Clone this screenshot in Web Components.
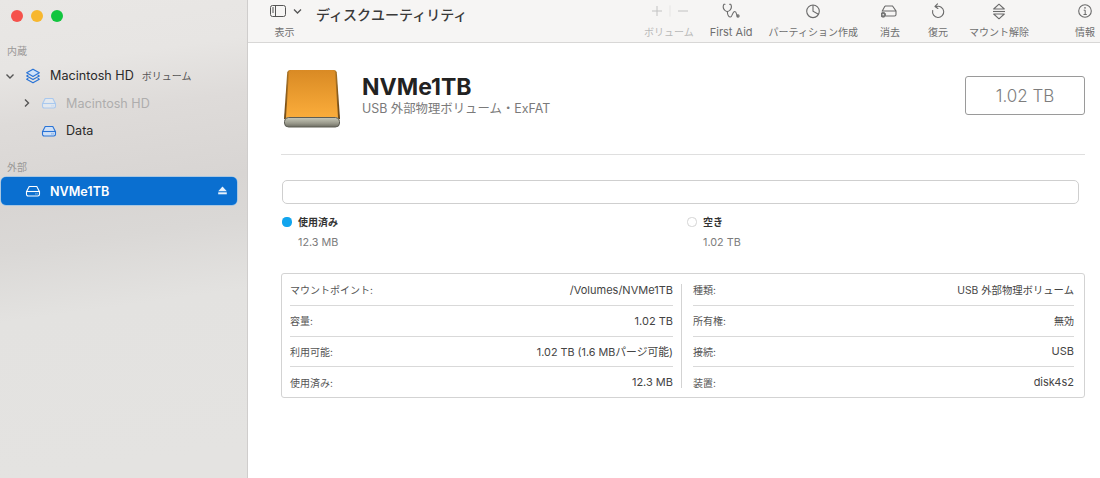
<!doctype html>
<html lang="ja">
<head>
<meta charset="utf-8">
<title>ディスクユーティリティ</title>
<style>
  html, body { margin: 0; height: 100%; overflow: hidden; }
  body { font-family: Inter, "Noto Sans CJK JP", sans-serif; color: #2b2b2b; }
</style>
</head>
<body>
<du-app>
  <du-sidebar slot="sidebar">
    <du-section>内蔵</du-section>
    <du-side-row depth="0" chevron="down" icon="stack" note="ボリューム" style="margin-top:4px;--h:27px">Macintosh HD</du-side-row>
    <du-side-row depth="1" chevron="right" icon="disk" dim style="--h:28px">Macintosh HD</du-side-row>
    <du-side-row depth="1" icon="disk">Data</du-side-row>
    <du-section style="margin-top:15.5px">外部</du-section>
    <du-side-row depth="0" icon="disk" selected style="margin-top:3px">NVMe1TB</du-side-row>
  </du-sidebar>

  <du-toolbar slot="toolbar">
    <du-tool icon="plusminus" disabled style="margin-left:0">ボリューム</du-tool>
    <du-tool icon="scope" style="margin-left:16px;--label:11px">First Aid</du-tool>
    <du-tool icon="pie" style="margin-left:16px">パーティション作成</du-tool>
    <du-tool icon="erase" style="margin-left:22px">消去</du-tool>
    <du-tool icon="restore" style="margin-left:28px">復元</du-tool>
    <du-tool icon="mount" style="margin-left:21px">マウント解除</du-tool>
    <du-tool icon="info" style="margin-left:46px">情報</du-tool>
  </du-toolbar>

  <du-header name="NVMe1TB" sub="USB 外部物理ボリューム・ExFAT" size="1.02 TB"></du-header>
  <du-usage></du-usage>
  <du-info>
    <du-info-row slot="left" label="マウントポイント:">/Volumes/NVMe1TB</du-info-row>
    <du-info-row slot="left" label="容量:">1.02 TB</du-info-row>
    <du-info-row slot="left" label="利用可能:" style="--value:10.8px">1.02 TB (1.6 MBパージ可能)</du-info-row>
    <du-info-row slot="left" label="使用済み:" last>12.3 MB</du-info-row>
    <du-info-row slot="right" label="種類:" style="--value:10.35px">USB 外部物理ボリューム</du-info-row>
    <du-info-row slot="right" label="所有権:" style="--value:10px">無効</du-info-row>
    <du-info-row slot="right" label="接続:">USB</du-info-row>
    <du-info-row slot="right" label="装置:" last>disk4s2</du-info-row>
  </du-info>
</du-app>

<script>
const DISK_PATH = `
  <path d="M4.2 2.5h7.6l2.7 5.2v2.6a1.7 1.7 0 0 1-1.7 1.7H3.2a1.7 1.7 0 0 1-1.7-1.7V7.700z" fill="var(--fill,none)"/>
  <path d="M1.700 7.500h12.600"/>
  <path d="M10.500 9.900h.9M12.300 9.900h.5" stroke-width="1"/>`

const ICONS = {
  disk: `<svg width="16" height="14" viewBox="0 0 16 14" fill="none" stroke="currentColor" stroke-width="1.1">${DISK_PATH}</svg>`,
  stack: `<svg width="16" height="16" viewBox="0 0 16 16" fill="none" stroke="currentColor" stroke-width="1.200" stroke-linejoin="round">
    <path d="M8 1.200 14.300 4.800 8 8.400 1.700 4.800z" fill="#cfe2fa"/>
    <path d="M3.300 7 1.700 8 8 11.600 14.300 8 12.700 7"/>
    <path d="M3.300 10.200 1.700 11.200 8 14.800 14.300 11.200 12.700 10.200"/></svg>`,
  plusminus: `<svg width="44" height="14" viewBox="0 0 44 14" fill="none" stroke="currentColor" stroke-width="1">
    <path d="M5 7h10M10 2v10M31 7h10"/><path d="M23 1.500v11" stroke-opacity=".3"/></svg>`,
  scope: `<svg width="18" height="16" viewBox="0 0 18 16" fill="none" stroke="currentColor" stroke-width="1.100" stroke-linecap="round" stroke-linejoin="round">
    <path d="M3 1.200H1.900C1 3 1 5.400 2.500 7 3.300 7.900 4.300 8.500 5.300 8.500S7.300 7.900 8.100 7C9.600 5.400 9.600 3 8.700 1.200H7.600"/>
    <path d="M5.300 8.500C5.500 12 7 14 8.500 14 10.500 14 10.300 8.500 12.700 8.500 15 8.500 14.300 13.500 16 13.500"/><circle cx="16" cy="13" r="1.100"/></svg>`,
  pie: `<svg width="16" height="16" viewBox="0 0 16 16" fill="none" stroke="currentColor" stroke-width="1.100">
    <circle cx="8" cy="8.300" r="6.300"/><path d="M8 2v6.300l5.400 3"/></svg>`,
  erase: `<svg width="18" height="15" viewBox="1.500 0 18 15" fill="none" stroke="currentColor" stroke-width="1.100">
    <path d="M5.500 2h7.500l3.500 5v3.500a1.500 1.500 0 0 1-1.500 1.500H6M2.500 7.500 5.500 2M3 7h13.500"/><circle cx="3.700" cy="10.800" r="2.400" fill="#7a7a7a" stroke-width=".9"/><circle cx="3.700" cy="10.800" r=".8" fill="#f6f5f4" stroke="none"/></svg>`,
  restore: `<svg width="16" height="17" viewBox="0 0 16 17" fill="none" stroke="currentColor" stroke-width="1.100" stroke-linecap="round" stroke-linejoin="round">
    <path d="M6.500 3.500A5.600 5.600 0 1 1 2.700 7.500"/><path d="M7.500.9 5 3.500l2.900 2"/></svg>`,
  mount: `<svg width="16" height="17" viewBox="0 0 16 17" fill="none" stroke="currentColor" stroke-width="1.100" stroke-linejoin="round">
    <path d="M8 1.200 13.300 6H2.700z"/><path d="M2 8.500h12"/><path d="M2.700 11h10.600L8 15.800z"/></svg>`,
  info: `<svg width="16" height="16" viewBox="0 0 16 16" fill="none" stroke="currentColor" stroke-width="1.100">
    <circle cx="8" cy="8" r="6.300"/><path d="M6.700 7.200H8.200V11.500M6.500 11.500H9.800" stroke-width="1"/><circle cx="8" cy="4.900" r=".8" fill="currentColor" stroke="none"/></svg>`,
}

function shadow(host, html) {
  const root = host.attachShadow({ mode: 'open' })
  root.innerHTML = html
  return root
}

class DuApp extends HTMLElement {
  constructor() {
    super()
    shadow(this, `
      <style>
        :host { display: flex; width: 1100px; height: 478px; background: #fff; }
        .side { width: 247px; flex: none; border-right: 1px solid #cfcdcc; }
        .main { flex: 1; min-width: 0; display: flex; flex-direction: column; }
        .body { padding: 0 15px 0 33px; }
      </style>
      <div class="side"><slot name="sidebar"></slot></div>
      <div class="main">
        <slot name="toolbar"></slot>
        <div class="body"><slot></slot></div>
      </div>`)
  }
}

class DuSidebar extends HTMLElement {
  constructor() {
    super()
    shadow(this, `
      <style>
        :host {
          display: block; height: 478px; box-sizing: border-box; padding: 10px 10px 0 1px;
          background: linear-gradient(172deg, #e9e7e5 0, #e7e5e3 70px, #dedbd9 125px, #d8d5d3 205px, #dad8d6 250px, #e3e2e0 320px, #e4e3e1 478px);
        }
        .lights { display: flex; gap: 8px; padding-left: 10px; margin-bottom: 22px; }
        .lights i { width: 12px; height: 12px; border-radius: 50%; }
      </style>
      <div class="lights">
        <i style="background:#f5524c"></i><i style="background:#f7b72f"></i><i style="background:#12c53f"></i>
      </div>
      <slot></slot>`)
  }
}

class DuSection extends HTMLElement {
  constructor() {
    super()
    shadow(this, `
      <style>
        :host { display: block; padding-left: 6px; font-size: 10px; line-height: 14px; color: #9a9897; }
      </style><slot></slot>`)
  }
}

class DuSideRow extends HTMLElement {
  connectedCallback() {
    const depth = Number(this.getAttribute('depth') || 0)
    const selected = this.hasAttribute('selected')
    const dim = this.hasAttribute('dim')
    const chev = this.getAttribute('chevron')
    const note = this.getAttribute('note')
    const chevPath = chev === 'down' ? 'M1.500 3.500 5 7l3.500-3.500' : 'M3 1.500 6.500 5 3 8.500'
    const icon = this.getAttribute('icon')
    shadow(this, `
      <style>
        :host { display: block; }
        .row {
          display: flex; align-items: center; height: var(--h, ${selected ? 28 : 27.5}px); box-sizing: border-box; border-radius: 5px;
          padding-left: ${depth ? 40 : 24}px; position: relative;
          font-size: 12.600px; font-weight: ${selected ? 600 : 400};
          color: ${selected ? '#fff' : dim ? '#aeadad' : '#2a2a2a'};
          background: ${selected ? '#0a6fd0' : 'none'};
          ${selected ? 'box-shadow: 0 0 0 .5px #7ab8ee;' : ''}
        }
        .chev { position: absolute; left: ${depth ? 21 : 4}px; top: 9px; color: #555; }
        .icon {
          width: 16px; flex: none; display: flex; justify-content: center; margin-right: 9px;
          color: ${selected ? '#fff' : dim ? '#a9c8ee' : '#2a74d6'};
          --fill: ${selected ? 'none' : dim ? '#e3e8ee' : '#cfe0f6'};
        }
        .note { margin-left: 8px; font-size: 10px; font-weight: 400; color: #555; }
        .eject { position: absolute; right: 10px; top: 9px; }
      </style>
      <div class="row">
        ${chev ? `<svg class="chev" width="10" height="10" viewBox="0 0 10 10" fill="none" stroke="currentColor" stroke-width="1.400"><path d="${chevPath}"/></svg>` : ''}
        <span class="icon">${ICONS[icon]}</span>
        <span><slot></slot></span>
        ${note ? `<span class="note">${note}</span>` : ''}
        ${selected ? '<svg class="eject" width="9" height="9" viewBox="0 0 9 9" fill="#e8f2fc"><path d="M4.500 .5 8.800 5.200H.2z"/><rect x=".2" y="6.300" width="8.600" height="2"/></svg>' : ''}
      </div>`)
  }
}

class DuToolbar extends HTMLElement {
  constructor() {
    super()
    shadow(this, `
      <style>
        :host {
          display: flex; height: 43px; box-sizing: border-box; flex: none;
          background: #f6f5f4; border-bottom: 1px solid #d8d7d6; padding-right: 5px; position: relative;
        }
        .view { width: 68px; padding-left: 22px; flex: none; box-sizing: border-box; }
        .glyphs { display: flex; align-items: center; gap: 7px; height: 22px; color: #555; }
        .label { display: block; width: 29px; text-align: center; font-size: 10px; line-height: 14px; color: #6f6f6f; margin-top: 3px; }
        .title { font-size: 14px; font-weight: 500; color: #3a3a3a; line-height: 16px; padding-top: 7px; width: 320px; flex: none; white-space: nowrap; }
        .tools { display: flex; flex: 1; justify-content: flex-end; }
      </style>
      <div class="view">
        <div class="glyphs">
          <svg width="16" height="12" viewBox="0 0 16 12" fill="none" stroke="currentColor" stroke-width="1"><rect x=".5" y=".5" width="15" height="11" rx="2"/><path d="M5.500 .5v11M2 3h2M2 5h2M2 7h2" /></svg>
          <svg width="9" height="7" viewBox="0 0 9 7" fill="none" stroke="currentColor" stroke-width="1.300"><path d="M1 1.500 4.500 5 8 1.500"/></svg>
        </div>
        <span class="label">表示</span>
      </div>
      <div class="title">ディスクユーティリティ</div>
      <div class="tools"><slot></slot></div>`)
  }
}

class DuTool extends HTMLElement {
  connectedCallback() {
    const off = this.hasAttribute('disabled')
    shadow(this, `
      <style>
        :host { display: flex; flex-direction: column; align-items: center; flex: none; }
        .glyph { height: 22px; display: flex; align-items: center; color: ${off ? '#c2c2c2' : '#6a6a6a'}; }
        .label { font-size: var(--label, 10px); line-height: 14px; margin-top: 3px; white-space: nowrap; color: ${off ? '#b9b9b9' : '#6f6f6f'}; }
      </style>
      <div class="glyph">${ICONS[this.getAttribute('icon')]}</div>
      <div class="label"><slot></slot></div>`)
  }
}

class DuHeader extends HTMLElement {
  connectedCallback() {
    shadow(this, `
      <style>
        :host {
          display: flex; align-items: flex-start; height: 112px; box-sizing: border-box;
          padding-top: 26px; border-bottom: 1px solid #dfdfdf;
        }
        svg { flex: none; margin-left: 1px; }
        .text { margin-left: 20px; flex: 1; padding-top: 4px; }
        .name { font-size: 23px; font-weight: 700; line-height: 29px; color: #222; }
        .sub { font-size: 12.400px; line-height: 15px; color: #7a7a7a; margin-top: -1px; }
        .size {
          width: 120px; height: 39px; box-sizing: border-box; margin-top: 7px; border: 1px solid #9a9a9a; border-radius: 3px;
          display: flex; align-items: center; justify-content: center; font-size: 17px; font-weight: 300; color: #7d7d7d;
        }
      </style>
      <svg width="60" height="60" viewBox="0 0 60 60">
        <defs>
          <linearGradient id="o" x1="0" y1="0" x2="0" y2="1"><stop offset="0" stop-color="#d98a24"/><stop offset="1" stop-color="#fbad3b"/></linearGradient>
          <linearGradient id="e" x1="0" y1="0" x2="1" y2="0"><stop offset="0" stop-color="#5f3d10"/><stop offset=".08" stop-color="#b57a25"/><stop offset=".92" stop-color="#b57a25"/><stop offset="1" stop-color="#553710"/></linearGradient>
          <linearGradient id="b" x1="0" y1="0" x2="0" y2="1"><stop offset="0" stop-color="#c8c9ba"/><stop offset=".6" stop-color="#9a9a8c"/><stop offset="1" stop-color="#6c6c62"/></linearGradient>
        </defs>
        <path d="M8 1h44q2.500 0 2.800 2.500L58 50H2L5.200 3.500Q5.500 1 8 1z" fill="url(#e)"/>
        <path d="M9 1h42q1.800 0 2 2l3 46H4L7 3q.2-2 2-2z" fill="url(#o)"/>
        <rect x="2.500" y="48.500" width="55" height="9.500" rx="4" fill="url(#b)" stroke="#5e5e55"/>
      </svg>
      <div class="text">
        <div class="name">${this.getAttribute('name')}</div>
        <div class="sub">${this.getAttribute('sub')}</div>
      </div>
      <div class="size">${this.getAttribute('size')}</div>`)
  }
}

class DuUsage extends HTMLElement {
  constructor() {
    super()
    shadow(this, `
      <style>
        :host { display: block; padding: 25px 6px 0 1px; }
        .bar { height: 24px; box-sizing: border-box; border: 1px solid #cfcfcf; border-radius: 5px; background: #fff; }
        .legend { display: flex; margin-top: 11px; }
        .item { display: grid; grid-template-columns: 16px auto; align-items: center; row-gap: 7px; }
        .item:first-child { width: 405px; }
        .dot { width: 10px; height: 10px; border-radius: 45%; box-sizing: border-box; margin-top: -1px; }
        .used { background: #12a5ee; }
        .free { border: 1px solid #d4d4d4; background: #fff; margin-left: 0; }
        b { font-size: 10px; font-weight: 700; line-height: 14px; color: #333; }
        .val { grid-column: 2; font-size: 10.800px; line-height: 14px; color: #7c7c7c; }
      </style>
      <div class="bar"></div>
      <div class="legend">
        <div class="item"><i class="dot used"></i><b>使用済み</b><span class="val">12.3 MB</span></div>
        <div class="item"><i class="dot free"></i><b>空き</b><span class="val">1.02 TB</span></div>
      </div>`)
  }
}

class DuInfo extends HTMLElement {
  constructor() {
    super()
    shadow(this, `
      <style>
        :host {
          display: flex; margin-top: 23px; height: 125px; box-sizing: border-box; border: 1px solid #d3d3d3; border-radius: 3px;
          padding: 1px 10px 0 8px;
        }
        .col { min-width: 0; display: flex; flex-direction: column; }
        .left { width: 383px; flex: none; }
        .right { flex: 1; }
        .sep { width: 1px; background: #d3d3d3; margin: 9px 11px 9px 8px; flex: none; }
      </style>
      <div class="col left"><slot name="left"></slot></div>
      <div class="sep"></div>
      <div class="col right"><slot name="right"></slot></div>`)
  }
}

class DuInfoRow extends HTMLElement {
  connectedCallback() {
    const last = this.hasAttribute('last')
    shadow(this, `
      <style>
        :host {
          display: flex; justify-content: space-between; align-items: center; height: ${last ? 30 : 31}px; box-sizing: border-box;
          font-size: 10px; color: #555; white-space: nowrap;
          border-bottom: ${last ? 'none' : '1px solid #d9d9d9'};
        }
        .v { color: #444; font-size: var(--value, 11px); }
      </style>
      <span>${this.getAttribute('label')}</span><span class="v"><slot></slot></span>`)
  }
}

customElements.define('du-app', DuApp)
customElements.define('du-sidebar', DuSidebar)
customElements.define('du-section', DuSection)
customElements.define('du-side-row', DuSideRow)
customElements.define('du-toolbar', DuToolbar)
customElements.define('du-tool', DuTool)
customElements.define('du-header', DuHeader)
customElements.define('du-usage', DuUsage)
customElements.define('du-info', DuInfo)
customElements.define('du-info-row', DuInfoRow)
</script>
</body>
</html>
